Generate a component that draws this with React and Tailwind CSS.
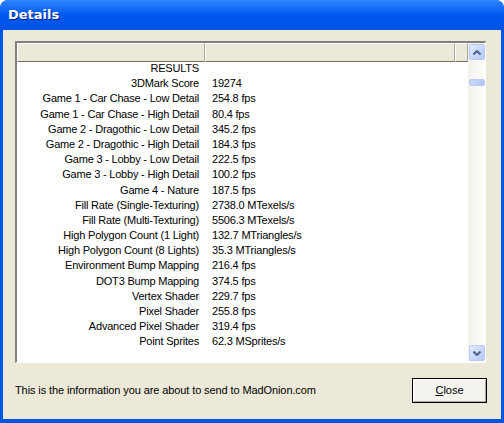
import React from "react";

const rows = [
  ["RESULTS", ""],
  ["3DMark Score", "19274"],
  ["Game 1 - Car Chase - Low Detail", "254.8 fps"],
  ["Game 1 - Car Chase - High Detail", "80.4 fps"],
  ["Game 2 - Dragothic - Low Detail", "345.2 fps"],
  ["Game 2 - Dragothic - High Detail", "184.3 fps"],
  ["Game 3 - Lobby - Low Detail", "222.5 fps"],
  ["Game 3 - Lobby - High Detail", "100.2 fps"],
  ["Game 4 - Nature", "187.5 fps"],
  ["Fill Rate (Single-Texturing)", "2738.0 MTexels/s"],
  ["Fill Rate (Multi-Texturing)", "5506.3 MTexels/s"],
  ["High Polygon Count (1 Light)", "132.7 MTriangles/s"],
  ["High Polygon Count (8 Lights)", "35.3 MTriangles/s"],
  ["Environment Bump Mapping", "216.4 fps"],
  ["DOT3 Bump Mapping", "374.5 fps"],
  ["Vertex Shader", "229.7 fps"],
  ["Pixel Shader", "255.8 fps"],
  ["Advanced Pixel Shader", "319.4 fps"],
  ["Point Sprites", "62.3 MSprites/s"],
];

const HeaderCell = ({ className }) => (
  <div
    className={`h-full bg-[#ECE9D8] border-t border-l border-t-white border-l-white border-r border-b border-r-[#ACA899] border-b-[#716F64] ${className}`}
  />
);

const ScrollButton = ({ up }) => (
  <div className="w-[16px] h-[16px] rounded-[2px] border border-[#B9CBF3] bg-gradient-to-br from-[#E1EAFE] to-[#B4C8F6] flex items-center justify-center">
    <svg width="8" height="5" viewBox="0 0 8 5">
      <path
        d={up ? "M0.5 4.5 L4 1 L7.5 4.5" : "M0.5 0.5 L4 4 L7.5 0.5"}
        fill="none"
        stroke="#4D6185"
        strokeWidth="2"
      />
    </svg>
  </div>
);

export default function App() {
  return (
    <div
      className="w-[504px] h-[423px] bg-[#0055E5] rounded-t-[8px] flex flex-col overflow-hidden"
      style={{ fontFamily: '"Liberation Sans", Arial, sans-serif' }}
    >
      {/* title bar */}
      <div className="h-[30px] shrink-0 rounded-t-[8px] bg-gradient-to-b from-[#2E86FF] via-[#0058EE] to-[#0054E3] flex items-center pl-[8px]">
        <span
          className="text-white font-bold text-[13px]"
          style={{ fontFamily: '"DejaVu Sans", Verdana, sans-serif', textShadow: "1px 1px 0 #0A1E8A" }}
        >
          Details
        </span>
      </div>

      {/* client area */}
      <div className="flex-1 mx-[3px] mb-[4px] bg-[#ECE9D8] flex flex-col pl-[12px] pr-[15px] pt-[11px]">
        {/* list view */}
        <div className="h-[322px] border-t-2 border-l-2 border-t-[#808080] border-l-[#808080] border-b border-r border-b-white border-r-white flex bg-white">
          <div className="flex-1 flex flex-col min-w-0">
            <div className="h-[19px] flex shrink-0">
              <HeaderCell className="w-[188px]" />
              <HeaderCell className="w-[250px]" />
              <HeaderCell className="flex-1" />
            </div>
            <div className="flex flex-col -mt-[1px] text-[11px] text-black leading-[15.2px] tracking-[-0.2px]">
              {rows.map(([label, value]) => (
                <div key={label} className="flex h-[15.2px]">
                  <div className="w-[188px] text-right pr-[6px] whitespace-nowrap">{label}</div>
                  <div className="pl-[7px] whitespace-nowrap">{value}</div>
                </div>
              ))}
            </div>
          </div>
          {/* scrollbar */}
          <div className="w-[17px] shrink-0 bg-gradient-to-r from-[#F3F1EC] to-[#FEFEFB] flex flex-col items-center pt-[1px] pb-[1px]">
            <ScrollButton up />
            <div className="mt-[19px] w-[16px] h-[7px] rounded-[2px] border border-[#B9CBF3] bg-gradient-to-r from-[#C9D8FC] to-[#B4C8F6]" />
            <div className="flex-1" />
            <ScrollButton />
          </div>
        </div>

        {/* footer */}
        <div className="flex items-center justify-between mt-[15px]">
          <span className="text-[11px] text-black tracking-[-0.1px]">
            This is the information you are about to send to MadOnion.com
          </span>
          <button className="w-[75px] h-[25px] border border-black bg-[#F4F3EE] shadow-[inset_1px_1px_0_#FFFFFF,inset_-1px_-1px_0_#ACA899] text-[11px] text-black mr-[-1px]">
            <span className="underline">C</span>lose
          </button>
        </div>
      </div>
    </div>
  );
}
